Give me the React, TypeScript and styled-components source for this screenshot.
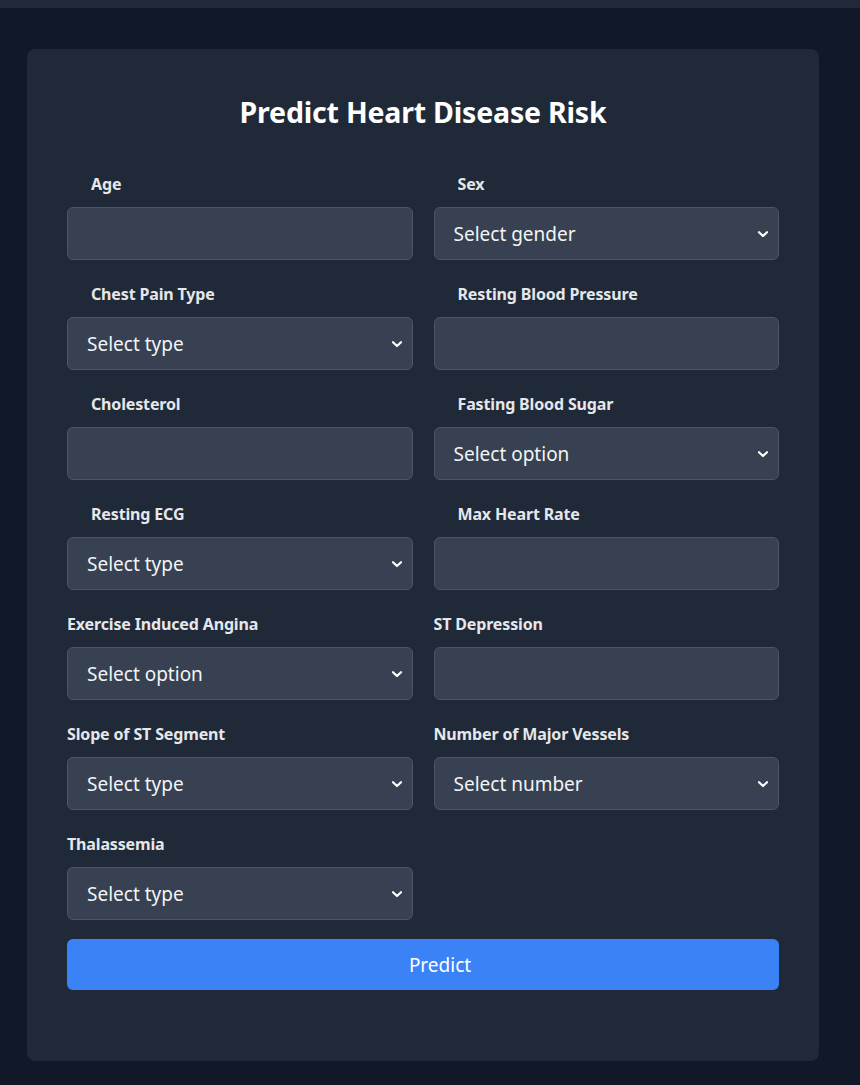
import React from "react";
import styled, { createGlobalStyle } from "styled-components";

const Global = createGlobalStyle`
  html, body { margin: 0; padding: 0; background: #111827; }
  body { font-family: "Noto Sans", "Open Sans", sans-serif; }
  * { box-sizing: border-box; }
`;

const TopBar = styled.div`
  height: 8px;
  background: #1f2937;
`;

const Page = styled.div`
  min-height: 1085px;
  background: #111827;
  padding: 41px 41px 24px 27px;
`;

const Card = styled.form`
  width: 792px;
  background: #1f2937;
  border-radius: 8px;
  padding: 45px 40px 71px 40px;
`;

const Title = styled.h1`
  margin: 0 0 44px 0;
  text-align: center;
  color: #ffffff;
  font-size: 28.5px;
  line-height: 36px;
  font-weight: 700;
  letter-spacing: -0.2px;
`;

const Grid = styled.div`
  display: grid;
  grid-template-columns: 1fr 1fr;
  column-gap: 21px;
  row-gap: 24px;
`;

const Field = styled.div`
  display: flex;
  flex-direction: column;
`;

const Label = styled.label<{ $indent?: boolean }>`
  display: block;
  height: 22px;
  line-height: 20px;
  margin-bottom: 11px;
  padding-left: ${(p) => (p.$indent ? "24px" : "0")};
  color: #e5e7eb;
  font-size: 16px;
  font-weight: 700;
  letter-spacing: -0.15px;
`;

const Input = styled.input`
  height: 53px;
  width: 100%;
  background: #374151;
  border: 1px solid #4b5563;
  border-radius: 6px;
  color: #f3f4f6;
  font-family: inherit;
  font-size: 19px;
  padding: 0 20px;
  outline: none;
`;

const SelectWrap = styled.div`
  position: relative;
  height: 53px;
`;

const Select = styled.select`
  appearance: none;
  height: 53px;
  width: 100%;
  background: #374151;
  border: 1px solid #4b5563;
  border-radius: 6px;
  color: #f3f4f6;
  font-family: inherit;
  font-size: 19px;
  padding: 1px 40px 0 19px;
  outline: none;
`;

const Chevron = styled.svg`
  position: absolute;
  right: 9px;
  top: 50%;
  margin-top: -7px;
  width: 14px;
  height: 14px;
  pointer-events: none;
`;

const Button = styled.button`
  margin-top: 19px;
  width: 100%;
  height: 51px;
  background: #3b82f6;
  border: none;
  border-radius: 6px;
  color: #ffffff;
  font-family: inherit;
  font-size: 19px;
  padding: 0 0 0 34px;
`;

type F = { label: string; kind: "input" | "select"; placeholder?: string; indent?: boolean };

const fields: F[] = [
  { label: "Age", kind: "input", indent: true },
  { label: "Sex", kind: "select", placeholder: "Select gender", indent: true },
  { label: "Chest Pain Type", kind: "select", placeholder: "Select type", indent: true },
  { label: "Resting Blood Pressure", kind: "input", indent: true },
  { label: "Cholesterol", kind: "input", indent: true },
  { label: "Fasting Blood Sugar", kind: "select", placeholder: "Select option", indent: true },
  { label: "Resting ECG", kind: "select", placeholder: "Select type", indent: true },
  { label: "Max Heart Rate", kind: "input", indent: true },
  { label: "Exercise Induced Angina", kind: "select", placeholder: "Select option" },
  { label: "ST Depression", kind: "input" },
  { label: "Slope of ST Segment", kind: "select", placeholder: "Select type" },
  { label: "Number of Major Vessels", kind: "select", placeholder: "Select number" },
  { label: "Thalassemia", kind: "select", placeholder: "Select type" },
];

export default function App() {
  return (
    <>
      <Global />
      <TopBar />
      <Page>
        <Card onSubmit={(e) => e.preventDefault()}>
          <Title>Predict Heart Disease Risk</Title>
          <Grid>
            {fields.map((f) => (
              <Field key={f.label}>
                <Label $indent={f.indent}>{f.label}</Label>
                {f.kind === "input" ? (
                  <Input type="number" />
                ) : (
                  <SelectWrap>
                    <Select defaultValue="">
                      <option value="">{f.placeholder}</option>
                    </Select>
                    <Chevron viewBox="0 0 14 14">
                      <path d="M3 5.2 L7 9 L11 5.2" fill="none" stroke="#ffffff" strokeWidth="2.2" strokeLinecap="round" strokeLinejoin="round" />
                    </Chevron>
                  </SelectWrap>
                )}
              </Field>
            ))}
          </Grid>
          <Button type="submit">Predict</Button>
        </Card>
      </Page>
    </>
  );
}
